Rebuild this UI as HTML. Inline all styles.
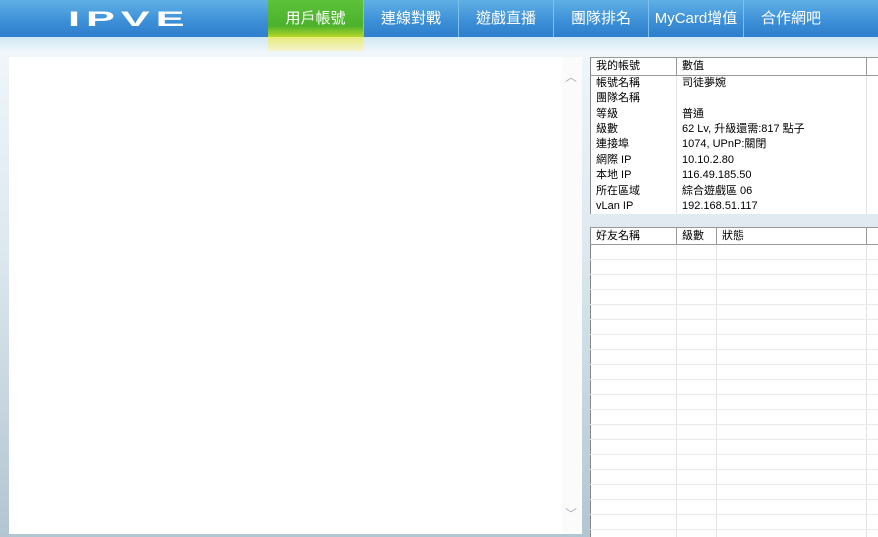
<!DOCTYPE html>
<html style="overflow:hidden"><head><meta charset="utf-8"><style>
*{margin:0;padding:0;box-sizing:border-box}
html,body{width:878px;height:537px;overflow:hidden}
body{position:relative;font-family:"Liberation Sans","Noto Sans CJK TC",sans-serif;background:linear-gradient(#f0f6fa 50px,#dde8ef 250px,#b2c5d1 537px)}
.top{position:absolute;left:0;top:0;width:878px;height:37px;background:linear-gradient(#5fb0e6,#3b8ed6 60%,#2f7fcc)}
.strip{position:absolute;left:0;top:37px;width:878px;height:14px;background:linear-gradient(#cfe7f3,#eef6fa)}
.tab{position:absolute;top:0;height:37px;width:95px;color:#fff;font-size:15px;text-align:center;line-height:37px;border-left:1px solid #7cc0ee}
.tab.act{background:linear-gradient(#5cc23a,#4cb22c 70%,#b6d82a);border:none}
.glow{position:absolute;top:37px;left:268px;width:95px;height:14px;background:linear-gradient(#e6ea7a,#f4f4d0)}
.logo{position:absolute;left:68px;top:7px;color:#fff;font:900 22px "Liberation Sans",sans-serif;letter-spacing:3px;transform:scaleX(1.97) scaleY(0.95);transform-origin:left top;}
.left{position:absolute;left:9px;top:57px;width:573px;height:477px;background:#fff}
.sb{position:absolute;left:553px;top:0;width:20px;height:477px;background:#fbfbfb}
.arr{position:absolute;left:565px;color:#aab;font-size:12px}
.wrap{position:absolute;left:590px;top:227px;width:300px;height:310px;overflow:hidden}
table{position:absolute;border-collapse:collapse;font-size:11px;background:#fff;table-layout:fixed}
td{border-right:1px solid #e3e3e3;height:15px;padding:0 0 0 5px;white-space:nowrap;line-height:14px;color:#000}
.t1{left:590px;top:57px;width:300px;height:157px;border-left:1px solid #888;border-top:1px solid #999}
.t1 tr.h td,.t2 tr.h td{border-right:1px solid #999;border-bottom:1px solid #999;height:17px;background:#fff}
.t2{left:0;top:0;width:300px;border-left:1px solid #888;border-top:1px solid #999}
.t2 tr:not(.h) td{border-bottom:1px solid #eaeaea}
</style></head><body>
<div class="top"></div><div class="strip"></div>
<div class="glow"></div>
<div class="logo">IPVE</div>
<div class="tab act" style="left:268px">用戶帳號</div>
<div class="tab" style="left:363px">連線對戰</div>
<div class="tab" style="left:458px">遊戲直播</div>
<div class="tab" style="left:553px">團隊排名</div>
<div class="tab" style="left:648px">MyCard增值</div>
<div class="tab" style="left:743px">合作網吧</div>
<div class="left"><div class="sb"></div></div>
<div class="arr" style="top:68px">︿</div>
<div class="arr" style="top:505px">﹀</div>
<table class="t1"><col style="width:86px"><col style="width:190px"><col style="width:24px">
<tr class="h"><td>我的帳號</td><td>數值</td><td></td></tr>
<tr><td>帳號名稱</td><td>司徒夢婉</td><td></td></tr>
<tr><td>團隊名稱</td><td></td><td></td></tr>
<tr><td>等級</td><td>普通</td><td></td></tr>
<tr><td>級數</td><td>62 Lv, 升級還需:817 點子</td><td></td></tr>
<tr><td>連接埠</td><td>1074, UPnP:關閉</td><td></td></tr>
<tr><td>網際 IP</td><td>10.10.2.80</td><td></td></tr>
<tr><td>本地 IP</td><td>116.49.185.50</td><td></td></tr>
<tr><td>所在區域</td><td>綜合遊戲區 06</td><td></td></tr>
<tr><td>vLan IP</td><td>192.168.51.117</td><td></td></tr>
</table>
<div class="wrap">
<table class="t2"><col style="width:86px"><col style="width:40px"><col style="width:150px"><col style="width:24px">
<tr class="h"><td>好友名稱</td><td>級數</td><td>狀態</td><td></td></tr>
<tr><td></td><td></td><td></td><td></td></tr><tr><td></td><td></td><td></td><td></td></tr>
<tr><td></td><td></td><td></td><td></td></tr><tr><td></td><td></td><td></td><td></td></tr>
<tr><td></td><td></td><td></td><td></td></tr><tr><td></td><td></td><td></td><td></td></tr>
<tr><td></td><td></td><td></td><td></td></tr><tr><td></td><td></td><td></td><td></td></tr>
<tr><td></td><td></td><td></td><td></td></tr><tr><td></td><td></td><td></td><td></td></tr>
<tr><td></td><td></td><td></td><td></td></tr><tr><td></td><td></td><td></td><td></td></tr>
<tr><td></td><td></td><td></td><td></td></tr><tr><td></td><td></td><td></td><td></td></tr>
<tr><td></td><td></td><td></td><td></td></tr><tr><td></td><td></td><td></td><td></td></tr>
<tr><td></td><td></td><td></td><td></td></tr><tr><td></td><td></td><td></td><td></td></tr>
<tr><td></td><td></td><td></td><td></td></tr><tr><td></td><td></td><td></td><td></td></tr>
<tr><td></td><td></td><td></td><td></td></tr>
</table>
</div>
</body></html>
